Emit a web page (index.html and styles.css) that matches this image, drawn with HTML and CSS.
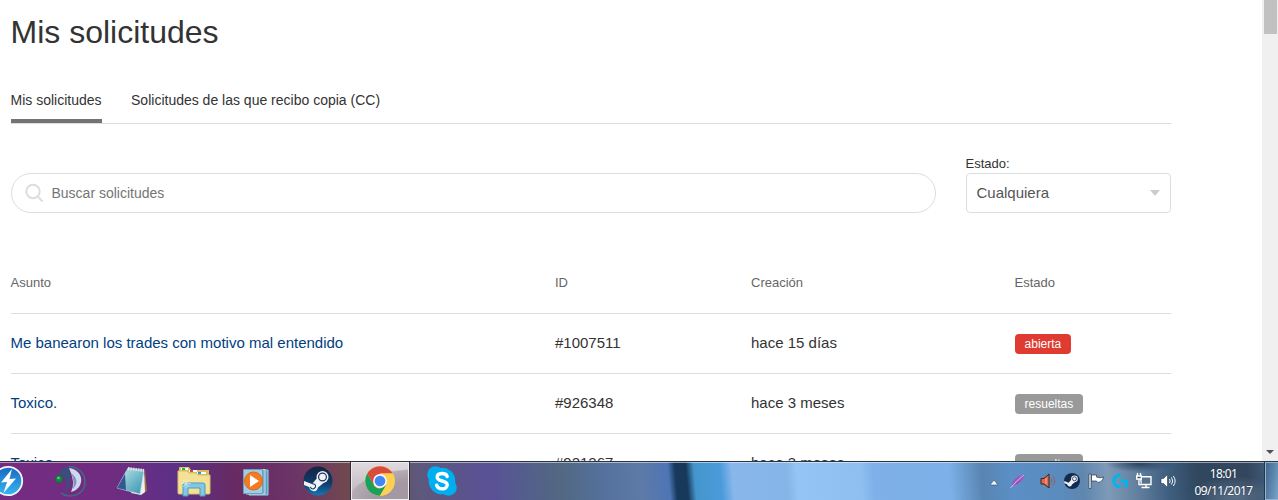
FILE: index.html
```html
<!DOCTYPE html>
<html lang="es">
<head>
    <meta charset="UTF-8">
    <meta name="viewport" content="width=device-width, initial-scale=1.0">
    <title>Mis solicitudes</title>
    <link rel="stylesheet" href="styles.css">
</head>
<body>

    <div class="window">
        <main class="page">
            <h1>Mis solicitudes</h1>

            <nav class="tabs">
                <a class="tab active">Mis solicitudes</a>
                <a class="tab">Solicitudes de las que recibo copia (CC)</a>
            </nav>

            <div class="filters">
                <div class="search">
                    <svg width="20" height="20" viewBox="0 0 20 20" fill="none" stroke="#ddd" stroke-width="2">
                        <circle cx="8" cy="8.500" r="6.700"/>
                        <path d="M12.800 13.300L17.500 18.500"/>
                    </svg>
                    <span>Buscar solicitudes</span>
                </div>
                <div class="status-filter">
                    <label>Estado:</label>
                    <div class="select">Cualquiera<span class="caret"></span></div>
                </div>
            </div>

            <table class="requests">
                <thead>
                    <tr>
                        <th class="col-subject">Asunto</th>
                        <th class="col-id">ID</th>
                        <th class="col-date">Creación</th>
                        <th>Estado</th>
                    </tr>
                </thead>
                <tbody>
                    <tr>
                        <td><a>Me banearon los trades con motivo mal entendido</a></td>
                        <td>#1007511</td>
                        <td>hace 15 días</td>
                        <td class="status"><span class="badge open">abierta</span></td>
                    </tr>
                    <tr>
                        <td><a>Toxico.</a></td>
                        <td>#926348</td>
                        <td>hace 3 meses</td>
                        <td class="status"><span class="badge">resueltas</span></td>
                    </tr>
                    <tr>
                        <td><a>Toxico</a></td>
                        <td>#921267</td>
                        <td>hace 3 meses</td>
                        <td class="status"><span class="badge">resueltas</span></td>
                    </tr>
                </tbody>
            </table>
        </main>

        <div class="scrollbar">
            <div class="thumb"></div>
            <div class="arrow-down"></div>
        </div>
    </div>

    <footer class="taskbar">
        <div class="apps">
            <!-- Daemon Tools -->
            <div class="app">
                <svg width="32" height="32" viewBox="0 0 32 32">
                    <defs><linearGradient id="daemon" x2="0" y2="1"><stop offset="0" stop-color="#1768c0"/><stop offset="1" stop-color="#35b8f2"/></linearGradient></defs>
                    <circle cx="16" cy="16" r="14.2" fill="url(#daemon)" stroke="#f4f4f8" stroke-width="1.8"/>
                    <path d="M20 4L9 17.500L15 17L11.500 28L24 13.500L17.500 14Z" fill="#fff"/>
                </svg>
            </div>
            <!-- TeamSpeak -->
            <div class="app">
                <svg width="32" height="32" viewBox="0 0 32 32">
                    <path d="M14 2C20 0 31 6 31 17C31 26 24 31 15 31Q11 31 7 28" fill="none" stroke="#466583" stroke-width="1.700"/>
                    <path d="M5 10C6 4 11 1 16 2L16 21Q14 26 10 26Q15 20 11 13Z" fill="#3c4c7c"/>
                    <path d="M15 3C31 5 31 24 17 27Q22 18 15 3Z" fill="#cdd9ed"/>
                    <path d="M17 8C24 13 24 19 19 24Q21 16 17 8Z" fill="#8393bc"/>
                    <circle cx="5" cy="14" r="3.800" fill="#168440" stroke="#285d54"/>
                    <circle cx="4.500" cy="13" r="1.300" fill="#64c878"/>
                </svg>
            </div>
            <!-- Notepad -->
            <div class="app">
                <svg width="32" height="32" viewBox="0 0 32 32">
                    <defs><linearGradient id="note" x2="1" y2="1"><stop offset="0" stop-color="#c9e9f0"/><stop offset=".55" stop-color="#72b9c9"/><stop offset="1" stop-color="#3a92ab"/></linearGradient></defs>
                    <path d="M29 5L31 26L26 29Z" fill="#9b7046"/>
                    <path d="M28 4L29 27L25 30L15 28Z" fill="#edf0ee"/>
                    <path d="M12 3L28 5L24 29L1 23Z" fill="url(#note)" stroke="#bad9df" stroke-width=".7"/>
                    <path d="M9 9L10 25L1 23Z" fill="#35598f"/>
                    <path d="M12 3.500L28 5.500" stroke="#e1e5e3" stroke-width="3" stroke-dasharray="1.500 1"/>
                </svg>
            </div>
            <!-- Explorer -->
            <div class="app">
                <svg width="34" height="32" viewBox="0 0 34 32">
                    <path d="M2 3Q2 2 3 2H12L14 5H32V28H2Z" fill="#d9bd61"/>
                    <path d="M4 3H11V5H4ZM12 5H20V7H12ZM20 7H29V9H20Z" fill="#fff"/>
                    <path d="M5 3H8V5H5Z" fill="#18b63b"/>
                    <path d="M13 5H16V7H13Z" fill="#d9462d"/>
                    <path d="M21 7H24V9H21Z" fill="#2a91dc"/>
                    <path d="M1 6H10L12 8H19L21 10H33V28Q33 29 32 29H2Q1 29 1 28Z" fill="#f3e295" stroke="#d8bd68"/>
                    <path d="M6 31V20Q6 18 8 18H26Q28 18 28 20V31H23V23H11V31Z" fill="#83c7e5" stroke="#4b9cc4"/>
                    <path d="M9 14V23M4.500 18.500H14M6 15L12 22M12 15L6 22" stroke="#fff" stroke-width=".6" opacity=".8"/>
                </svg>
            </div>
            <!-- Media Player -->
            <div class="app">
                <svg width="32" height="32" viewBox="0 0 32 32">
                    <path d="M9 5H28V30H9Z" fill="#5b9dc2" stroke="#a5d0e4"/>
                    <path d="M6 4.500H25V29H6Z" fill="#75afcd" stroke="#bbdeed"/>
                    <path d="M3.500 4.500H22.500V28.500H3.500Z" fill="#a2cce2" stroke="#68a2c1"/>
                    <circle cx="13.500" cy="16" r="9" fill="#f47b20" stroke="#d96a1b"/>
                    <path d="M10 10L19 16L10 22Z" fill="#fff"/>
                </svg>
            </div>
            <!-- Steam -->
            <div class="app">
                <svg width="32" height="32" viewBox="0 0 32 32">
                    <defs><linearGradient id="steam" x2="0" y2="1"><stop offset="0" stop-color="#152344"/><stop offset=".6" stop-color="#103d6b"/><stop offset="1" stop-color="#1478b5"/></linearGradient></defs>
                    <circle cx="16" cy="16" r="14.500" fill="url(#steam)"/>
                    <path d="M2 16L10 19L16 12L24 16L16 22.500Q15 27 11 26Q8 25.500 7 22L2 20Z" fill="#eef1f5"/>
                    <circle cx="20.500" cy="12" r="6" fill="#eef1f5"/>
                    <circle cx="20.500" cy="12" r="3.900" fill="none" stroke="#183459" stroke-width="1.200"/>
                    <path d="M8 22Q11 26 13.500 22Q14 18.500 10 18.700" fill="none" stroke="#183459" stroke-width="1.100"/>
                </svg>
            </div>
            <!-- Chrome -->
            <div class="app current">
                <svg width="32" height="32" viewBox="0 0 32 32">
                    <circle cx="16" cy="16" r="14.800" fill="#fdd04f"/>
                    <path d="M3.200 8.600A14.800 14.800 0 0 1 28.800 8.600H16L9.600 19.700Z" fill="#d94b3c"/>
                    <path d="M3.200 8.600A14.800 14.800 0 0 0 16 30.800L22.400 19.700L16 23.400Q11.500 23.500 9.600 19.700Z" fill="#1c9f5b"/>
                    <path d="M16 8.600H28.800A14.800 14.800 0 0 1 16 30.800L22.400 19.700Q24.500 12.500 16 8.600Z" fill="#fdd04f"/>
                    <circle cx="16" cy="16" r="6.900" fill="#f5f5f5"/>
                    <circle cx="16" cy="16" r="5.300" fill="#4286f5"/>
                </svg>
            </div>
            <!-- Skype -->
            <div class="app">
                <svg width="32" height="32" viewBox="0 0 32 32">
                    <circle cx="9.500" cy="9.500" r="8.300" fill="#00aff0"/>
                    <circle cx="22.500" cy="22.500" r="8.300" fill="#00aff0"/>
                    <circle cx="16" cy="16" r="13.300" fill="#00aff0"/>
                    <path d="M21.200 11.500C20 7.500 11.200 7.500 11.200 12C11.200 17.500 21.200 14.500 21.200 20C21.200 25 12 25 10.700 20.200" fill="none" stroke="#fff" stroke-width="3.400" stroke-linecap="round"/>
                </svg>
            </div>
        </div>

        <div class="tray">
            <div class="tray-icon">
                <svg class="tray-arrow" width="10" height="7" viewBox="0 0 10 7"><path d="M5 1L9 6H1Z" fill="#f4f6f8" stroke="#35506c" stroke-width=".6"/></svg>
            </div>
            <div class="tray-icon feather">
                <svg width="16" height="16" viewBox="0 0 16 16">
                    <path d="M1.500 13.500Q2 7 8 4L15 1Q13 8 8 11L3 12.500Z" fill="#9a55bd"/>
                    <path d="M.5 15Q6 8 14 2" fill="none" stroke="#e1b7ee"/>
                </svg>
            </div>
            <div class="tray-icon">
                <svg width="16" height="16" viewBox="0 0 16 16">
                    <path d="M1 5.500H4L9 1V15L4 11H1Z" fill="#e0694a" stroke="#42201b"/>
                    <path d="M6 5V11" stroke="#ffb198"/>
                    <path d="M11 5.500Q12.500 8 11 10.500M13 3.500Q16.500 8 13 12.500" fill="none" stroke="#9a5f58"/>
                </svg>
            </div>
            <div class="tray-icon">
                <svg width="16" height="16" viewBox="1.500 1.500 29 29">
                    <circle cx="16" cy="16" r="14.500" fill="#122c51"/>
                    <path d="M2 16L10 19L16 12L24 16L16 22.500Q15 27 11 26Q8 25.500 7 22L2 20Z" fill="#eef1f5"/>
                    <circle cx="20.500" cy="12" r="6" fill="#eef1f5"/>
                    <circle cx="20.500" cy="12" r="3.600" fill="none" stroke="#183459" stroke-width="1.500"/>
                </svg>
            </div>
            <div class="tray-icon">
                <svg width="16" height="16" viewBox="0 0 16 16">
                    <path d="M1 1H3V15.500H1Z M3.500 2H8.500V4Q12 5.500 15.500 4Q14.500 9 10 9.500L8.500 8H3.500Z" fill="#fff" stroke="#2a3b4d" stroke-width=".7"/>
                </svg>
            </div>
            <div class="tray-icon">
                <svg width="16" height="16" viewBox="0 0 16 16" fill="none" stroke="#00b5ee" stroke-width="3">
                    <path d="M9 2.200H7.500A5.800 5.800 0 0 0 7.500 13.800H9"/>
                    <path d="M8.500 8H14.500V14.500"/>
                </svg>
            </div>
            <div class="tray-icon">
                <svg width="16" height="16" viewBox="0 0 16 16" fill="none" stroke="#fff" stroke-width="1.400">
                    <path d="M5 3.700H15V11.500H5Z" fill="#56728e"/>
                    <path d="M10 12V14.500M5.500 14.500H13.500"/>
                    <path d="M1.500 0V3M4.500 0V3M.7 3H5.300V6H.7ZM3 6V11.500H5" fill="#38536e"/>
                </svg>
            </div>
            <div class="tray-icon">
                <svg width="16" height="16" viewBox="0 0 16 16">
                    <path d="M1 5.500H3.500L7.500 1.500V14.500L3.500 10.500H1Z" fill="#fff" stroke="#293b4d" stroke-width=".6"/>
                    <path d="M9.500 6Q10.800 8 9.500 10M11.500 4.500Q14 8 11.500 11.500M13.300 3Q17 8 13.300 13" fill="none" stroke="#f4f6f8"/>
                </svg>
            </div>
            <div class="clock">
                <span>18:01</span>
                <span>09/11/2017</span>
            </div>
            <div class="show-desktop"></div>
        </div>
    </footer>

</body>
</html>
```
FILE: styles.css
```css
* {
    box-sizing: border-box;
}
body {
    margin: 0;
    height: 500px;
    display: flex;
    flex-direction: column;
    overflow: hidden;
    background: #fff;
    color: #333;
    font-family: "Liberation Sans", Arial, sans-serif;
    font-size: 15px;
}
.window {
    height: 461px;
    display: flex;
    justify-content: space-between;
    overflow: hidden;
}
.page {
    width: 1171px;
    padding: 13px 0 0 11px;
}
h1 {
    margin: 0;
    font-size: 32px;
    font-weight: normal;
    line-height: 38px;
    text-indent: -0.500px;
}

/* Tabs */
.tabs {
    display: flex;
    gap: 30px;
    height: 41px;
    margin-top: 32px;
    border-bottom: 1px solid #ddd;
    font-size: 14px;
}
.tab {
    height: 40px;
    padding-top: 9px;
    line-height: 16px;
    text-indent: -0.500px;
}
.tab.active {
    border-bottom: 4px solid #737373;
}

/* Search and status filter */
.filters {
    display: flex;
    align-items: flex-end;
    gap: 30px;
    height: 89px;
}
.search {
    flex: 1;
    display: flex;
    align-items: center;
    gap: 6.500px;
    height: 40px;
    padding-left: 13px;
    border: 1px solid #ddd;
    border-radius: 20px;
    color: #757575;
    font-size: 14px;
}
.status-filter {
    width: 205px;
    font-size: 13px;
    text-indent: -0.500px;
}
.status-filter label {
    display: block;
    line-height: 18px;
}
.select {
    display: flex;
    align-items: center;
    justify-content: space-between;
    height: 40px;
    padding: 0 10px 2px;
    border: 1px solid #ddd;
    border-radius: 4px;
    color: #555;
    font-size: 15px;
}
.caret {
    margin-top: 2px;
    border: 5px solid transparent;
    border-top: 6px solid #ccc;
    border-bottom: 0;
}

/* Requests table */
.requests {
    width: 1160px;
    margin-top: 40px;
    border-collapse: separate;
    border-spacing: 0;
    table-layout: fixed;
}
.requests th,
.requests td {
    height: 60px;
    padding: 0 0 2px;
    border-bottom: 1px solid #ddd;
    text-align: left;
    text-indent: -0.500px;
}
.requests th {
    height: 61px;
    color: #666;
    font-size: 13px;
    font-weight: normal;
}
.requests td.status {
    padding-bottom: 0;
    text-indent: 0;
}
.requests a {
    color: #004080;
}
.col-subject {
    width: 544.500px;
}
.col-id {
    width: 196px;
}
.col-date {
    width: 263.500px;
}
.badge {
    display: inline-block;
    height: 20px;
    padding: 0 9.600px;
    border-radius: 4px;
    background: #999;
    color: #fff;
    font-size: 12px;
    line-height: 20px;
    vertical-align: middle;
}
.badge.open {
    background: #e03b30;
}

/* Scrollbar */
.scrollbar {
    width: 16px;
    display: flex;
    flex-direction: column;
    align-items: center;
    justify-content: space-between;
    background: #f0f0f0;
    padding-bottom: 7px;
}
.thumb {
    width: 13px;
    height: 34px;
    background: #c1c1c1;
}
.arrow-down {
    border: 4px solid transparent;
    border-top: 4px solid #505050;
    border-bottom: 0;
}

/* Taskbar */
.taskbar {
    height: 39px;
    display: flex;
    justify-content: space-between;
    border-top: 1px solid #2c3442;
    box-shadow: inset 0 1px 0 rgba(255, 255, 255, 0.5);
    overflow: hidden;
    background:
        radial-gradient(ellipse 34px 8px at 1140px 2px, #2c4664, transparent),
        radial-gradient(ellipse 46px 20px at 1235px 34px, #5a7089, transparent),
        linear-gradient(85deg, #742c82 0, #702c80 110px, #5c3087 180px, #672a62 235px, #6b3368 290px, #70494f 350px, #5d587c 420px, #5a5197 490px, #52608a 530px, #526882 560px, #54709b 600px, #5d7aa8 640px, #4e75b5 668px, #173a5c 675px, #173a5c 686px, #4595cc 694px, #4b9bdc 720px, #89b7ec 732px, #84b4e8 785px, #94c3f5 796px, #8fbef1 860px, #7fb0e8 872px, #7db0e8 948px, #5885b2 980px, #5b8fc6 1010px, #5a8bbd 1060px, #5f86ae 1080px, #7e9ab8 1105px, #6683a2 1130px, #3f5f80 1165px, #30475f 1195px, #34465d 1245px, #46688c 1278px);
    background-color: #54709b;
}
.apps {
    display: flex;
    margin-left: -23px;
}
.app {
    width: 62px;
    display: flex;
    align-items: center;
    justify-content: center;
}
.app.current {
    width: 58px;
    margin: 0 2px;
    border: 1px solid #eee;
    box-shadow: 0 0 0 1px #302938;
    background: radial-gradient(ellipse 66px 32px at 62px 38px, #a398a3 0, #a398a3 60%, #b5abb4 96%, transparent 100%), linear-gradient(#dedade, #bbb3ba);
}
.tray {
    display: flex;
}
.tray-icon {
    width: 24px;
    display: flex;
    align-items: center;
    justify-content: center;
}
.tray-arrow {
    margin-top: 2px;
}
.feather {
    margin-right: 6px;
}
.clock {
    width: 85px;
    padding: 3px 0 0 2px;
    color: #fff;
    font-family: "Noto Sans", sans-serif;
    font-size: 12px;
    letter-spacing: -0.600px;
    line-height: 17px;
    text-align: center;
    text-shadow: 0 0 2px #26384c;
}
.clock span {
    display: block;
}
.show-desktop {
    width: 13px;
    border: 1px solid #93b2cd;
    border-width: 1px 0 1px 1px;
    box-shadow: -1px 0 0 #26384c;
    background: linear-gradient(100deg, #3f668f, #79a4cc);
}
```
